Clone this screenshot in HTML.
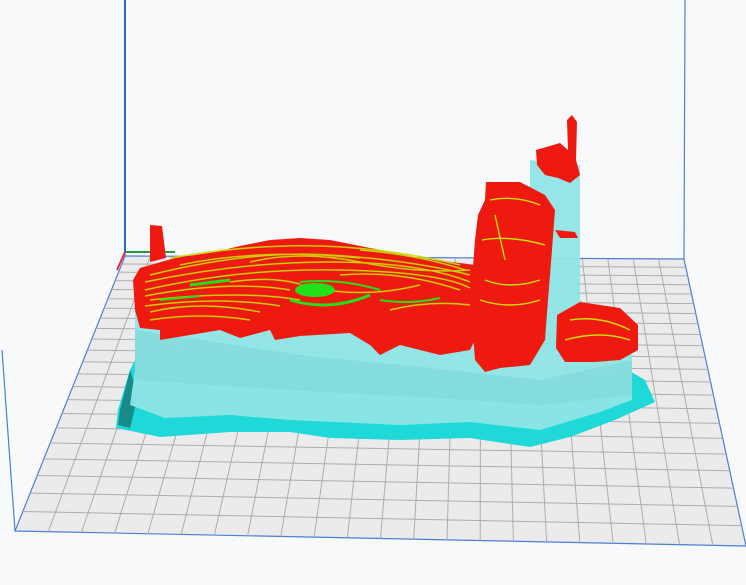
<!DOCTYPE html>
<html><head><style>html,body{margin:0;padding:0;background:#f8f9fa;width:746px;height:585px;overflow:hidden}</style></head>
<body>
<svg id="s" width="746" height="585" viewBox="0 0 746 585" xmlns="http://www.w3.org/2000/svg">
<rect width="746" height="585" fill="#f8f9fa"/>
<line x1="125" y1="0" x2="125" y2="256" stroke="#4a7fd4" stroke-width="1.2"/>
<line x1="685" y1="0" x2="684" y2="259" stroke="#4a7fd4" stroke-width="1.2"/>
<line x1="2" y1="350" x2="15" y2="531" stroke="#4a7fd4" stroke-width="1.2"/>
<polygon points="125,256 684,259 746,546 15,531" fill="#ebebeb" stroke="#4a7fd4" stroke-width="1.2"/>
<g id="grid" stroke="#adadad" stroke-width="1"></g>
<line x1="125" y1="252" x2="175" y2="252" stroke="#2a9a3a" stroke-width="2"/>
<line x1="125" y1="252" x2="117" y2="270" stroke="#d33" stroke-width="2"/>
<line x1="125" y1="0" x2="125" y2="252" stroke="#2b66d6" stroke-width="2"/>
<!-- cyan skirt/base -->
<path d="M130,370 L118,410 L116,428 L160,437 L230,432 L290,432 L330,438 L400,440 L470,438 L530,447 L570,437 L615,420 L655,402 L645,380 L628,370 L600,380 L540,385 L470,375 L300,360 L140,350 Z" fill="#1fd9d9"/>
<path d="M130,370 L120,410 L118,425 L130,428 L138,395 Z" fill="#178a8a"/>
<!-- translucent cyan body -->
<path d="M135,300 L135,370 L130,405 L165,418 L230,415 L290,420 L400,425 L470,422 L540,430 L600,412 L632,400 L632,330 L580,300 L580,165 L530,160 L530,185 L480,265 L300,245 L160,262 Z" fill="#8fe6e6" opacity="0.95"/>
<path d="M135,330 L135,380 L290,390 L470,400 L540,405 L632,395 L632,360 L540,380 L470,372 L300,355 Z" fill="#7fd6d8" opacity="0.6"/>
<!-- red bed -->
<path d="M133,280 L140,268 L175,258 L215,252 L240,246 L270,240 L300,238 L330,240 L370,248 L420,258 L475,265 L480,330 L470,350 L440,355 L400,345 L380,355 L370,345 L350,333 L300,336 L275,340 L270,330 L240,338 L220,330 L160,340 L160,330 L140,328 L135,310 Z" fill="#ee1a10"/>
<path d="M150,225 L162,226 L166,258 L150,262 Z" fill="#ee1a10"/>
<g fill="none" stroke="#c8e000" stroke-width="1.5" opacity="0.9">
<path d="M150,275 Q250,250 330,255 T470,275"/>
<path d="M145,290 Q240,268 340,270 T470,288"/>
<path d="M150,300 Q240,290 300,300"/>
<path d="M180,265 Q260,248 360,258"/>
<path d="M300,285 Q360,300 420,285"/>
<path d="M360,250 Q420,255 465,270"/>
<path d="M150,312 Q200,300 260,312"/>
<path d="M145,282 Q240,262 330,262 T470,282"/>
<path d="M145,296 Q230,280 290,290"/>
<path d="M145,306 Q220,296 280,306"/>
<path d="M170,258 Q250,244 320,246 T460,265"/>
<path d="M250,262 Q300,250 360,262 T470,270"/>
<path d="M340,275 Q400,270 460,290"/>
<path d="M150,320 Q200,312 250,320"/>
<path d="M390,310 Q430,300 470,305"/>
<path d="M230,282 Q270,276 300,284"/>
</g>
<ellipse cx="315" cy="290" rx="20" ry="7" fill="#22e01a"/>
<path d="M290,300 Q330,312 370,295" stroke="#22e01a" stroke-width="3" fill="none"/>
<path d="M380,300 Q410,305 440,298" stroke="#22e01a" stroke-width="2" fill="none"/>
<path d="M190,285 L230,280" stroke="#22e01a" stroke-width="3"/>
<path d="M300,282 Q340,278 380,290" stroke="#22e01a" stroke-width="2" fill="none"/>
<path d="M160,300 L200,296" stroke="#22e01a" stroke-width="2"/>
<!-- body & hand -->
<path d="M486,182 L520,182 L545,195 L555,210 L552,250 L548,300 L545,340 L530,365 L500,368 L485,372 L475,360 L472,320 L472,280 L475,240 L478,215 L485,200 Z" fill="#ee1a10"/>
<path d="M555,230 L575,232 L578,238 L560,238 Z" fill="#ee1a10"/>
<path d="M536,150 L560,143 L568,150 L567,120 L572,115 L577,122 L576,160 L580,175 L570,183 L558,178 L545,175 L537,165 Z" fill="#ee1a10"/>
<path d="M557,315 L580,302 L620,308 L638,325 L638,350 L620,360 L595,362 L565,362 L556,348 Z" fill="#ee1a10"/>
<g stroke="#c8e000" stroke-width="1.4" fill="none">
<path d="M490,200 Q515,195 540,205"/><path d="M482,240 Q510,235 545,245"/>
<path d="M485,280 Q510,290 540,280"/><path d="M570,320 Q600,315 630,330"/>
<path d="M495,215 L505,260"/>
<path d="M480,300 Q510,310 540,300"/><path d="M565,340 Q600,330 630,340"/>
</g>
</svg>
<script>
var g=document.getElementById('grid');
var TL=[125,256],TR=[684,259],BR=[746,546],BL=[15,531];
function lerp(a,b,t){return [a[0]+(b[0]-a[0])*t,a[1]+(b[1]-a[1])*t];}
function persp(s){var k=1.6;return s*k/(1+(k-1)*s);}
var R=22,C=22,h='';
for(var i=1;i<R;i++){var t=1-persp(1-i/R);var a=lerp(TL,BL,t),b=lerp(TR,BR,t);
h+='<line x1="'+a[0]+'" y1="'+a[1]+'" x2="'+b[0]+'" y2="'+b[1]+'"/>';}
for(var j=1;j<C;j++){var u=j/C;var a=lerp(TL,TR,u),b=lerp(BL,BR,u);
h+='<line x1="'+a[0]+'" y1="'+a[1]+'" x2="'+b[0]+'" y2="'+b[1]+'"/>';}
g.innerHTML=h;
</script>
</body></html>
